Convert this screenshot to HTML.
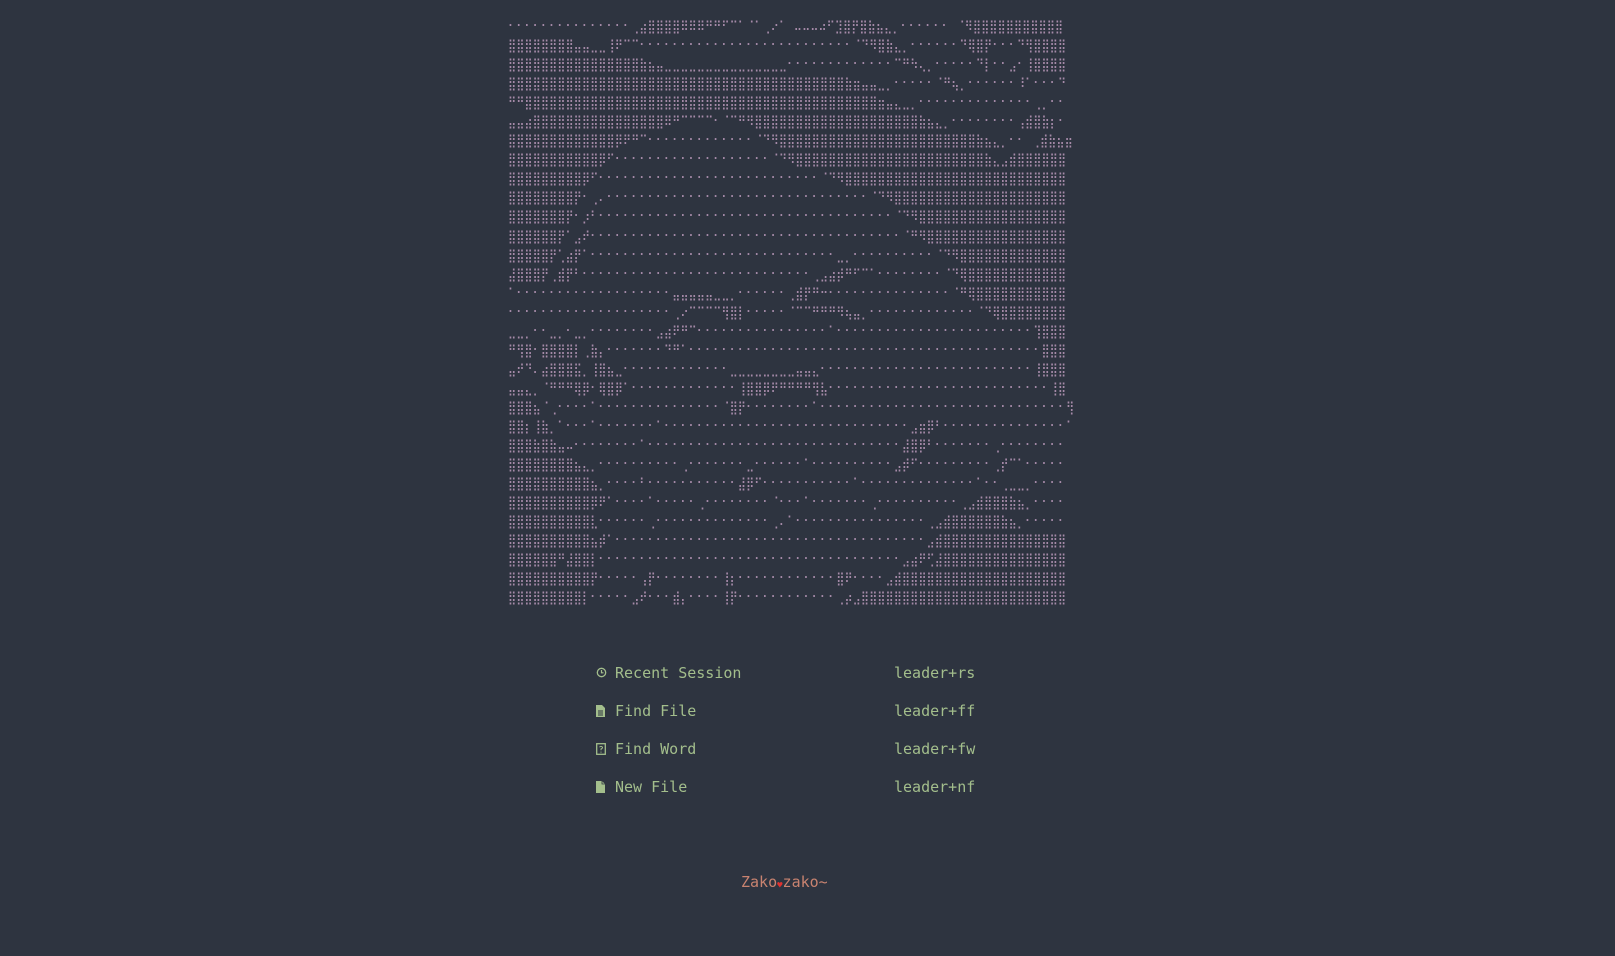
<!DOCTYPE html>
<html><head><meta charset="utf-8"><style>
html,body{margin:0;padding:0;background:#2e3440;width:1615px;height:956px;overflow:hidden}
#art{position:absolute;left:508px;top:18px;margin:0;font-family:"DejaVu Sans Mono",monospace;font-size:13.5px;line-height:19.05px;color:#a58aa8;white-space:pre;letter-spacing:0;transform:scaleX(0.83);transform-origin:0 0}
.m{position:absolute;font-family:"DejaVu Sans Mono","Liberation Mono",monospace;font-size:15px;color:#a3be8c;white-space:pre}
.ic{position:absolute;left:596px}
.t{left:615px}
.k{left:894px}
#f{position:absolute;left:741px;top:873px;font-family:"DejaVu Sans Mono",monospace;font-size:15px;color:#c98370;white-space:pre}
#f b{color:#e0312f;font-size:9px;font-weight:normal;vertical-align:-1px}
</style></head><body>
<pre id="art">⠂⠂⠂⠂⠂⠂⠂⠂⠂⠂⠂⠂⠂⠂⠂⢀⣴⣿⣿⣿⣿⠿⠿⠿⠛⠛⠋⠉⠁⠈⠁⢀⠔⠁ ⠤⠤⠤⠴⠋⣹⣿⡟⣿⣷⣦⣄⡀⠂⠂⠂⠂⠂⠂ ⠈⠻⣿⣿⣿⣿⣿⣿⣿⣿⣿⣿⣿
⣿⣿⣿⣿⣿⣿⣿⣿⣤⣤⣀⣀⢸⠟⠉⠉⠂⠂⠂⠂⠂⠂⠂⠂⠂⠂⠂⠂⠂⠂⠂⠂⠂⠂⠂⠂⠂⠂⠂⠂⠂⠂⠈⠙⠻⣿⣷⣄⡀⠂⠂⠂⠂⠂⠂⠙⢿⣿⡟⠂⠂⠂⠙⢻⣿⣿⣿⣿
⣿⣿⣿⣿⣿⣿⣿⣿⣿⣿⣿⣿⣿⣿⣿⣿⣷⣦⣤⣀⣀⣀⣀⣀⣀⣀⣀⣀⣀⣀⣀⣀⣀⣀⠂⠂⠂⠂⠂⠂⠂⠂⠂⠂⠂⠂⠂⠉⠛⠳⢄⡀⠂⠂⠂⠂⠂⠙⡇⠂⠂⣠⠂⢸⣿⣿⣿⣿
⣿⣿⣿⣿⣿⣿⣿⣿⣿⣿⣿⣿⣿⣿⣿⣿⣿⣿⣿⣿⣿⣿⣿⣿⣿⣿⣿⣿⣿⣿⣿⣿⣿⣿⣿⣿⣿⣿⣿⣿⣿⣷⣶⣤⣤⣀⡀⠂⠂⠂⠂⠂⠈⠛⢦⡀⠂⠂⠂⠂⠂⠂⠸⠁⠂⠂⠂⠙
⠛⠛⣿⣿⣿⣿⣿⣿⣿⣿⣿⣿⣿⣿⣿⣿⣿⣿⣿⣿⣿⣿⣿⣿⣿⣿⣿⣿⣿⣿⣿⣿⣿⣿⣿⣿⣿⣿⣿⣿⣿⣿⣿⣿⣿⣶⣤⣄⣀⡀⠂⠂⠂⠂⠂⠂⠂⠂⠂⠂⠂⠂⠂⠂⢀⡀⠂⠂
⣤⣤⣴⣿⣿⣿⣿⣿⣿⣿⣿⣿⣿⣿⣿⣿⣿⣿⣿⠿⠛⠉⠉⠉⠉⠂⠈⠉⠛⠻⣿⣿⣿⣿⣿⣿⣿⣿⣿⣿⣿⣿⣿⣿⣿⣿⣿⣿⣿⣿⣷⣦⣄⡀⠂⠂⠂⠂⠂⠂⠂⠂⢠⣾⣿⣷⡆⠂ 
⣿⣿⣿⣿⣿⣿⣿⣿⣿⣿⣿⣿⣿⡿⠟⠛⠉⠂⠂⠂⠂⠂⠂⠂⠂⠂⠂⠂⠂⠂⠈⠙⠻⣿⣿⣿⣿⣿⣿⣿⣿⣿⣿⣿⣿⣿⣿⣿⣿⣿⣿⣿⣿⣿⣿⣿⣿⣷⣦⣄⡀⠂⠂ ⢀⣾⣷⣦⣶
⣿⣿⣿⣿⣿⣿⣿⣿⣿⣿⣿⡿⠋⠂⠂⠂⠂⠂⠂⠂⠂⠂⠂⠂⠂⠂⠂⠂⠂⠂⠂⠂⠈⠙⠻⣿⣿⣿⣿⣿⣿⣿⣿⣿⣿⣿⣿⣿⣿⣿⣿⣿⣿⣿⣿⣿⣿⣿⣷⣄⣠⣾⣿⣿⣿⣿⣿⣿
⣿⣿⣿⣿⣿⣿⣿⣿⣿⡿⠋⠂⠂⠂⠂⠂⠂⠂⠂⠂⠂⠂⠂⠂⠂⠂⠂⠂⠂⠂⠂⠂⠂⠂⠂⠂⠂⠂⠈⠙⠻⣿⣿⣿⣿⣿⣿⣿⣿⣿⣿⣿⣿⣿⣿⣿⣿⣿⣿⣿⣿⣿⣿⣿⣿⣿⣿⣿
⣿⣿⣿⣿⣿⣿⣿⣿⡟⠂⢀⠄⠂⠂⠂⠂⠂⠂⠂⠂⠂⠂⠂⠂⠂⠂⠂⠂⠂⠂⠂⠂⠂⠂⠂⠂⠂⠂⠂⠂⠂⠂⠂⠂⠈⠙⠻⣿⣿⣿⣿⣿⣿⣿⣿⣿⣿⣿⣿⣿⣿⣿⣿⣿⣿⣿⣿⣿
⣿⣿⣿⣿⣿⣿⣿⡟⠂⡰⠃⠂⠂⠂⠂⠂⠂⠂⠂⠂⠂⠂⠂⠂⠂⠂⠂⠂⠂⠂⠂⠂⠂⠂⠂⠂⠂⠂⠂⠂⠂⠂⠂⠂⠂⠂⠂⠈⠙⠻⣿⣿⣿⣿⣿⣿⣿⣿⣿⣿⣿⣿⣿⣿⣿⣿⣿⣿
⣿⣿⣿⣿⣿⣿⡟⠁⣠⠞⠂⠂⠂⠂⠂⠂⠂⠂⠂⠂⠂⠂⠂⠂⠂⠂⠂⠂⠂⠂⠂⠂⠂⠂⠂⠂⠂⠂⠂⠂⠂⠂⠂⠂⠂⠂⠂⠂⠈⠛⠻⣿⣿⣿⣿⣿⣿⣿⣿⣿⣿⣿⣿⣿⣿⣿⣿⣿
⣿⣿⣿⣿⣿⡟⢁⣴⡟⠁⠂⠂⠂⠂⠂⠂⠂⠂⠂⠂⠂⠂⠂⠂⠂⠂⠂⠂⠂⠂⠂⠂⠂⠂⠂⠂⠂⠂⠂⠂⣀⡀⠂⠂⠂⠂⠂⠂⠂⠂⠂⠂⠈⠙⠻⣿⣿⣿⣿⣿⣿⣿⣿⣿⣿⣿⣿⣿
⣼⣿⣿⣿⡟⢀⣾⡟⠃⠂⠂⠂⠂⠂⠂⠂⠂⠂⠂⠂⠂⠂⠂⠂⠂⠂⠂⠂⠂⠂⠂⠂⠂⠂⠂⠂⠂⢀⣠⣴⡾⠛⠋⠉⠁⠂⠂⠂⠂⠂⠂⠂⠂⠈⠙⢿⣿⣿⣿⣿⣿⣿⣿⣿⣿⣿⣿⣿
⠁⠂⠂⠂⠂⠂⠂⠂⠂⠂⠂⠂⠂⠂⠂⠂⠂⠂⠂⠂⣤⣤⣤⣤⣤⣀⣀⡀⠂⠂⠂⠂⠂⠂⢀⣾⡟⠛⠒⠂⠂⠂⠂⠂⠂⠂⠂⠂⠂⠂⠂⠂⠂⠂⠈⠛⢿⣿⣿⣿⣿⣿⣿⣿⣿⣿⣿⣿
⠂⠂⠂⠂⠂⠂⠂⠂⠂⠂⠂⠂⠂⠂⠂⠂⠂⠂⠂⠂⢀⠔⠉⠉⠉⠉⢻⣿⡇⠂⠂⠂⠂⠂⠈⠉⠉⠛⠛⠛⠻⢦⣤⡀⠂⠂⠂⠂⠂⠂⠂⠂⠂⠂⠂⠂⠂⠈⠙⢿⣿⣿⣿⣿⣿⣿⣿⣿
⣀⣀⡀⠂⠂⣀⡀⠂⣀⡀⠂⠂⠂⠂⠂⠂⠂⠂⣠⣴⠟⠛⠉⠂⠂⠂⠂⠂⠂⠂⠂⠂⠂⠂⠂⠂⠂⠂⠂⠁⠂⠂⠂⠂⠂⠂⠂⠂⠂⠂⠂⠂⠂⠂⠂⠂⠂⠂⠂⠂⠂⠂⠂⠂⢹⣿⣿⣿
⠛⢻⣿⠂⣿⣿⣿⣿⡇⢀⣷⡄⠂⠂⠂⠂⠂⠂⠂⠙⠛⠁⠂⠂⠂⠂⠂⠂⠂⠂⠂⠂⠂⠂⠂⠂⠂⠂⠂⠂⠂⠂⠂⠂⠂⠂⠂⠂⠂⠂⠂⠂⠂⠂⠂⠂⠂⠂⠂⠂⠂⠂⠂⠂⠂⣿⣿⣿
⣤⠞⠙⠄⣴⣿⣿⣿⣯⡀⢸⣿⣦⣀⠂⠂⠂⠂⠂⠂⠂⠂⠂⠂⠂⠂⠂⣀⣀⣀⣀⣀⣀⣀⣀⣤⣤⣄⠂⠂⠂⠂⠂⠂⠂⠂⠂⠂⠂⠂⠂⠂⠂⠂⠂⠂⠂⠂⠂⠂⠂⠂⠂⠂⢸⣿⣿⣿
⣤⣤⣄⡀⠈⠛⠛⠛⢿⡿⠂⢿⣿⡿⠁⠂⠂⠂⠂⠂⠂⠂⠂⠂⠂⠂⠂⠂⢸⣿⣿⡿⠟⠛⠛⠛⠛⢻⣧⠂⠂⠂⠂⠂⠂⠂⠂⠂⠂⠂⠂⠂⠂⠂⠂⠂⠂⠂⠂⠂⠂⠂⠂⠂⠂⠂⢸⣿
⣿⣿⣿⣦⠈⢀⠂⠂⠂⠂⠁⠂⠂⠂⠂⠂⠂⠂⠂⠂⠂⠂⠂⠂⠂⠂⠈⣿⡟⠂⠂⠂⠂⠂⠂⠂⠂⠁⠂⠂⠂⠂⠂⠂⠂⠂⠂⠂⠂⠂⠂⠂⠂⠂⠂⠂⠂⠂⠂⠂⠂⠂⠂⠂⠂⠂⠂⠂⢻
⣿⣿⡆⢸⣷⡀⠁⠂⠂⠂⠁⠂⠂⠂⠂⠂⠂⠂⠁⠂⠂⠂⠂⠂⠂⠂⠂⠂⠂⠂⠂⠂⠂⠂⠂⠂⠂⠂⠂⠂⠂⠂⠂⠂⠂⠂⠂⠂⠂⣠⣶⡿⠃⠂⠂⠂⠂⠂⠂⠂⠂⠂⠂⠂⠂⠂⠂⠂⠁
⣿⣿⣿⣷⣿⣷⣤⠤⠂⠂⠂⠂⠂⠂⠂⠂⠁⠂⠂⠂⠂⠂⠂⠂⠂⠂⠂⠂⠂⠂⠂⠂⠂⠂⠂⠂⠂⠂⠂⠂⠂⠂⠂⠂⠂⠂⠂⠂⣼⣿⡿⠃⠂⠂⠂⠂⠂⠂⠂⢀⠂⠂⠂⠂⠂⠂⠂⠂
⣿⣿⣿⣿⣿⣿⣿⣿⣦⣄⡀⠂⠂⠂⠂⠂⠂⠂⠂⠂⠂⢀⠂⠂⠂⠂⠂⠂⠂⣀⠂⠂⠂⠂⠂⠂⠁⠂⠂⠂⠂⠂⠂⠂⠂⠂⠂⣠⡾⠋⠂⠂⠂⠂⠂⠂⠂⠂⠂⢀⡞⠉⠁⠂⠂⠂⠂⠂
⣿⣿⣿⣿⣿⣿⣿⣿⣿⣿⣦⡀⠂⠂⠂⠂⠃⠂⠂⠂⠂⠂⠂⠂⠂⠂⠂⠂⣼⡿⠋⠂⠂⠂⠂⠂⠂⠂⠂⠂⠂⠂⠁⠂⠂⠂⠂⠂⠂⠂⠂⠂⠂⠂⠂⠂⠂⠁⠂⠂⢀⣀⣀⡀⠂⠂⠂⠂
⣿⣿⣿⣿⣿⣿⣿⣿⣿⣿⡿⠟⠁⠂⠂⠂⠂⠁⠂⠂⠂⠂⠂⢀⠂⠂⠂⠂⠂⠂⠂⠂⠈⠂⠂⠂⠁⠂⠂⠂⠂⠂⠂⠂⢀⠂⠂⠂⠂⠂⠂⠂⠂⠂⠂⢀⣠⣾⣿⣿⣿⣷⣦⡀⠂⠂⠂⠂
⣿⣿⣿⣿⣿⣿⣿⣿⣿⣿⣇⠂⠂⠂⠂⠂⠂⢀⠂⠂⠂⠂⠂⠂⠂⠂⠂⠂⠂⠂⠂⠂⢀⠄⠁⠂⠂⠂⠂⠂⠂⠂⠂⠂⠂⠂⠂⠂⠂⠂⠂⢀⣠⣾⣿⣿⣿⣿⣿⣿⣷⣦⡀⠂⠂⠂⠂⠂
⣿⣿⣿⣿⣿⣿⣿⣿⣿⣿⣦⡾⠁⠂⠂⠂⠂⠂⠂⠂⠂⠂⠂⠂⠂⠂⠂⠂⠂⠂⠂⠂⠂⠂⠂⠂⠂⠂⠂⠂⠂⠂⠂⠂⠂⠂⠂⠂⠂⠂⠂⣠⣾⣿⣿⣿⣿⣿⣿⣿⣿⣿⣿⣿⣿⣿⣿⣿
⣿⣿⣿⣿⣿⣿⠛⣼⣿⣿⡇⠂⠂⠂⠂⠂⠂⠂⠂⠂⠂⠂⠂⠂⠂⠂⠂⠂⠂⠂⠂⠂⠂⠂⠂⠂⠂⠂⠂⠂⠂⠂⠂⠂⠂⠂⠂⠂⣠⣴⠟⢋⣼⣿⣿⣿⣿⣿⣿⣿⣿⣿⣿⣿⣿⣿⣿⣿
⣿⣿⣿⣿⣿⣿⣿⣿⣿⣿⡟⠂⠂⠂⠂⠂⢠⡟⠂⠂⠂⠂⠂⠂⠂⠂⢸⡆⠂⠂⠂⠂⠂⠂⠂⠂⠂⠂⠂⠂⣿⠟⠂⠂⠂⠂⣠⣾⣿⣿⣿⣿⣿⣿⣿⣿⣿⣿⣿⣿⣿⣿⣿⣿⣿⣿⣿⣿
⣿⣿⣿⣿⣿⣿⣿⣿⣿⡇⠂⠂⠂⠂⠂⣠⠞⠂⠂⠂⣾⡄⠂⠂⠂⠂⢸⡟⠂⠂⠂⠂⠂⠂⠂⠂⠂⠂⠂⠂⢀⡴⣠⣿⣿⣿⣿⣿⣿⣿⣿⣿⣿⣿⣿⣿⣿⣿⣿⣿⣿⣿⣿⣿⣿⣿⣿⣿</pre>

<div class="m t" style="top:664px">Recent Session</div><div class="m k" style="top:664px">leader+rs</div>
<div class="m t" style="top:702px">Find File</div><div class="m k" style="top:702px">leader+ff</div>
<div class="m t" style="top:740px">Find Word</div><div class="m k" style="top:740px">leader+fw</div>
<div class="m t" style="top:778px">New File</div><div class="m k" style="top:778px">leader+nf</div>

<svg class="ic" style="top:667px" width="11" height="11" viewBox="0 0 11 11"><circle cx="5.5" cy="5.5" r="4.2" fill="none" stroke="#a3be8c" stroke-width="1.3"/><path d="M5.5 3v2.8H7.5" fill="none" stroke="#a3be8c" stroke-width="1.2"/></svg>
<svg class="ic" style="top:705px" width="10" height="12" viewBox="0 0 10 12"><path d="M0 0H6L9 3V12H0Z" fill="#a3be8c"/><path d="M2 6H7M2 8H7M2 10H7" stroke="#2e3440" stroke-width="0.9"/></svg>
<svg class="ic" style="top:743px" width="10" height="12" viewBox="0 0 10 12"><rect x="0.7" y="0.7" width="8.6" height="10.6" fill="none" stroke="#a3be8c" stroke-width="1.3"/><path d="M3.5 4.2Q5 2.5 6.5 4.2Q6.5 5.5 5 6V7.3M5 8.6V9.6" fill="none" stroke="#a3be8c" stroke-width="1"/></svg>
<svg class="ic" style="top:781px" width="10" height="12" viewBox="0 0 10 12"><path d="M0 0H6L9 3V12H0Z" fill="#a3be8c"/><path d="M6 0V3H9" fill="none" stroke="#2e3440" stroke-width="0.8"/></svg>

<div id="f">Zako<b>♥</b>zako~</div>
</body></html>
